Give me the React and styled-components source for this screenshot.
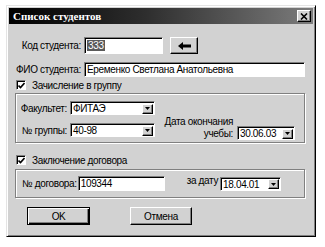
import styled, { createGlobalStyle } from "styled-components"

const Global = createGlobalStyle`
  html, body { margin: 0; padding: 0; background: #ffffff; }
  body {
    font-family: "Liberation Sans", Arial, sans-serif;
    font-size: 10px;
    letter-spacing: -0.35px;
    color: #000;
  }
  * { box-sizing: border-box; }
`

const Window = styled.div`
  margin: 5px 0 0 6px;
  width: 310px;
  height: 232px;
  background: #d2d2d2;
  border-top: 1px solid #e4e4e4;
  border-left: 1px solid #e4e4e4;
  border-right: 1px solid #000;
  border-bottom: 1px solid #000;
  box-shadow: inset 1px 1px #fff, inset -1px -1px #808080;
  padding: 2px;
  display: flex;
  flex-direction: column;
`

const TitleBar = styled.div`
  height: 16px;
  background: linear-gradient(90deg, #000 0%, #2e2e2e 45%, #7c7c7c 100%);
  display: flex;
  align-items: center;
  justify-content: space-between;
  padding: 0 2px 0 4px;
`

const Title = styled.span`
  font-family: "Liberation Serif", "Times New Roman", serif;
  font-weight: bold;
  font-size: 11px;
  letter-spacing: 0;
  color: #fff;
`

const CloseBtn = styled.div`
  width: 14px;
  height: 12px;
  background: #d2d2d2;
  border-top: 1px solid #fff;
  border-left: 1px solid #fff;
  border-right: 1px solid #000;
  border-bottom: 1px solid #000;
  box-shadow: inset -1px -1px #808080;
  display: flex;
  align-items: center;
  justify-content: center;
`

const Body = styled.div`
  display: flex;
  flex-direction: column;
  padding-top: 13px;
`

const Row = styled.div`
  display: flex;
  align-items: center;
  height: ${p => p.$h || 15}px;
  margin-top: ${p => p.$mt || 0}px;
`

const Label = styled.span`
  width: ${p => p.$w}px;
  text-align: right;
  margin-right: 3px;
  white-space: nowrap;
`

const TextBox = styled.div`
  width: ${p => p.$w}px;
  height: ${p => p.$h || 15}px;
  background: #fff;
  border-top: 1px solid #808080;
  border-left: 1px solid #808080;
  border-right: 1px solid #fff;
  border-bottom: 1px solid #fff;
  box-shadow: inset 1px 1px #000;
  display: flex;
  align-items: center;
  padding-left: 2px;
  white-space: nowrap;
  overflow: hidden;
`

const Selected = styled.span`
  background: #5a5a5a;
  color: #fff;
  padding: 0 1px;
`

const PushButton = styled.div`
  width: ${p => p.$w}px;
  height: ${p => p.$h}px;
  margin-left: ${p => p.$ml || 0}px;
  background: #d2d2d2;
  border-top: 1px solid ${p => (p.$def ? "#000" : "#fff")};
  border-left: 1px solid ${p => (p.$def ? "#000" : "#fff")};
  border-right: 1px solid #000;
  border-bottom: 1px solid #000;
  box-shadow: ${p =>
    p.$def
      ? "inset 1px 1px #fff, inset -1px -1px #000, inset -2px -2px #808080"
      : "inset -1px -1px #808080"};
  display: flex;
  align-items: center;
  justify-content: center;
`

const CheckRow = styled.div`
  display: flex;
  align-items: center;
  height: 12px;
  margin-top: ${p => p.$mt}px;
  padding-left: 7px;
  gap: 6px;
`

const CheckBox = styled.div`
  width: 10px;
  height: 10px;
  background: #fff;
  border-top: 1px solid #808080;
  border-left: 1px solid #808080;
  border-right: 1px solid #fff;
  border-bottom: 1px solid #fff;
  box-shadow: inset 1px 1px #000;
  display: flex;
  align-items: center;
  justify-content: center;
`

const Group = styled.div`
  margin-left: 6px;
  margin-top: ${p => p.$mt}px;
  width: 290px;
  height: ${p => p.$h}px;
  border: 1px solid #808080;
  box-shadow: inset 1px 1px #fff, 1px 1px #fff;
  padding: ${p => p.$pad};
  display: flex;
  align-items: ${p => p.$align || "flex-start"};
`

const Column = styled.div`
  display: flex;
  flex-direction: column;
  gap: 8px;
`

const DateBlock = styled.div`
  display: flex;
  align-items: flex-end;
  margin-left: 8px;
  margin-bottom: -3px;
`

const TwoLineLabel = styled.div`
  width: 70px;
  text-align: right;
  line-height: 12px;
  margin-right: 4px;
  white-space: nowrap;
`

const ComboBox = styled.div`
  width: ${p => p.$w}px;
  height: 14px;
  background: #fff;
  border-top: 1px solid #808080;
  border-left: 1px solid #808080;
  border-right: 1px solid #fff;
  border-bottom: 1px solid #fff;
  box-shadow: inset 1px 1px #000;
  display: flex;
  align-items: center;
  padding: 1px 1px 0 2px;
`

const ComboText = styled.span`
  flex: 1;
  white-space: nowrap;
`

const DropBtn = styled.div`
  width: 11px;
  height: 10px;
  background: #d2d2d2;
  border-top: 1px solid #fff;
  border-left: 1px solid #fff;
  border-right: 1px solid #000;
  border-bottom: 1px solid #000;
  box-shadow: inset -1px -1px #808080;
  display: flex;
  align-items: center;
  justify-content: center;
`

const Plain = styled.span`
  margin: ${p => p.$m || "0"};
  white-space: nowrap;
  align-self: ${p => p.$self || "auto"};
`

const ButtonRow = styled.div`
  display: flex;
  margin-top: 9px;
  margin-left: 18px;
  gap: 40px;
`

function Combo({ w, value }) {
  return (
    <ComboBox $w={w}>
      <ComboText>{value}</ComboText>
      <DropBtn>
        <svg width="5" height="3" viewBox="0 0 5 3">
          <path d="M0 0h5L2.5 3z" fill="#000" />
        </svg>
      </DropBtn>
    </ComboBox>
  )
}

function Check({ mt, label }) {
  return (
    <CheckRow $mt={mt}>
      <CheckBox>
        <svg width="7" height="7" viewBox="0 0 7 7">
          <path d="M0.5 3.5l2 2 4-4.5" stroke="#000" strokeWidth="1.6" fill="none" />
        </svg>
      </CheckBox>
      <span>{label}</span>
    </CheckRow>
  )
}

export default function App() {
  return (
    <>
      <Global />
      <Window>
        <TitleBar>
          <Title>Список студентов</Title>
          <CloseBtn>
            <svg width="8" height="7" viewBox="0 0 8 7">
              <path d="M1 0.5l6 6M7 0.5l-6 6" stroke="#000" strokeWidth="1.6" />
            </svg>
          </CloseBtn>
        </TitleBar>
        <Body>
          <Row $h={17}>
            <Label $w={72}>Код студента:</Label>
            <TextBox $w={79} $h={17}>
              <Selected>333</Selected>
            </TextBox>
            <PushButton $w={28} $h={17} $ml={7}>
              <svg width="13" height="8" viewBox="0 0 13 8">
                <path d="M0 4L5 0v2.5h8v3H5V8z" fill="#000" />
              </svg>
            </PushButton>
          </Row>
          <Row $mt={8}>
            <Label $w={72}>ФИО студента:</Label>
            <TextBox $w={221}>Еременко Светлана Анатольевна</TextBox>
          </Row>
          <Check mt={2} label="Зачисление в группу" />
          <Group $mt={2} $h={50} $pad="7px 0 5px 0" $align="flex-end">
            <Column>
              <Row $h={14}>
                <Label $w={51}>Факультет:</Label>
                <Combo w={85} value="ФИТАЭ" />
              </Row>
              <Row $h={14}>
                <Label $w={51}>№ группы:</Label>
                <Combo w={85} value="40-98" />
              </Row>
            </Column>
            <DateBlock>
              <TwoLineLabel>
                Дата окончания
                <br />
                учебы:
              </TwoLineLabel>
              <Combo w={58} value="30.06.03" />
            </DateBlock>
          </Group>
          <Check mt={11} label="Заключение договора" />
          <Group $mt={3} $h={29} $pad="0 0 0 6px" $align="center">
            <Plain $m="0 1px 0 0">№ договора:</Plain>
            <TextBox $w={87}>109344</TextBox>
            <Plain $m="5px 2px 0 22px" $self="flex-start">
              за дату
            </Plain>
            <Combo w={61} value="18.04.01" />
          </Group>
          <ButtonRow>
            <PushButton $w={63} $h={18} $def>
              OK
            </PushButton>
            <PushButton $w={62} $h={18}>
              Отмена
            </PushButton>
          </ButtonRow>
        </Body>
      </Window>
    </>
  )
}
